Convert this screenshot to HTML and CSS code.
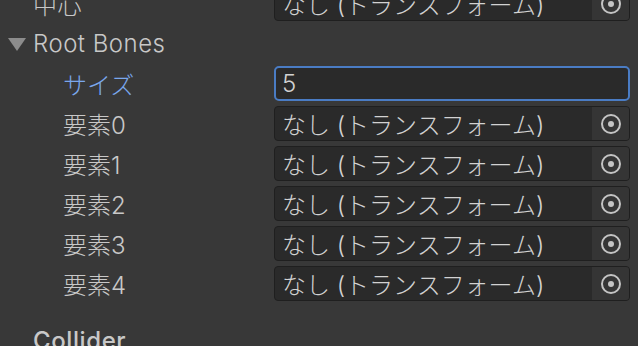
FILE: index.html
```html
<!DOCTYPE html>
<html lang="ja">
<head>
<meta charset="utf-8">
<link rel="stylesheet" href="styles.css">
</head>
<body>
<div class="inspector">
  <div class="row">
    <div class="label">中心</div>
    <div class="field object">
      <span class="value">なし (トランスフォーム)</span>
      <span class="picker"><svg viewBox="0 0 22 22" width="22" height="22"><circle cx="11" cy="11" r="9" fill="none" stroke="#c4c4c4" stroke-width="2"/><circle cx="11" cy="11" r="3" fill="#c4c4c4"/></svg></span>
    </div>
  </div>
  <div class="row">
    <div class="label foldout"><span class="tri"></span>Root Bones</div>
  </div>
  <div class="row">
    <div class="label nested active">サイズ</div>
    <div class="field input"><span class="value">5</span></div>
  </div>
  <div class="row">
    <div class="label nested">要素0</div>
    <div class="field object">
      <span class="value">なし (トランスフォーム)</span>
      <span class="picker"><svg viewBox="0 0 22 22" width="22" height="22"><circle cx="11" cy="11" r="9" fill="none" stroke="#c4c4c4" stroke-width="2"/><circle cx="11" cy="11" r="3" fill="#c4c4c4"/></svg></span>
    </div>
  </div>
  <div class="row">
    <div class="label nested">要素1</div>
    <div class="field object">
      <span class="value">なし (トランスフォーム)</span>
      <span class="picker"><svg viewBox="0 0 22 22" width="22" height="22"><circle cx="11" cy="11" r="9" fill="none" stroke="#c4c4c4" stroke-width="2"/><circle cx="11" cy="11" r="3" fill="#c4c4c4"/></svg></span>
    </div>
  </div>
  <div class="row">
    <div class="label nested">要素2</div>
    <div class="field object">
      <span class="value">なし (トランスフォーム)</span>
      <span class="picker"><svg viewBox="0 0 22 22" width="22" height="22"><circle cx="11" cy="11" r="9" fill="none" stroke="#c4c4c4" stroke-width="2"/><circle cx="11" cy="11" r="3" fill="#c4c4c4"/></svg></span>
    </div>
  </div>
  <div class="row">
    <div class="label nested">要素3</div>
    <div class="field object">
      <span class="value">なし (トランスフォーム)</span>
      <span class="picker"><svg viewBox="0 0 22 22" width="22" height="22"><circle cx="11" cy="11" r="9" fill="none" stroke="#c4c4c4" stroke-width="2"/><circle cx="11" cy="11" r="3" fill="#c4c4c4"/></svg></span>
    </div>
  </div>
  <div class="row">
    <div class="label nested">要素4</div>
    <div class="field object">
      <span class="value">なし (トランスフォーム)</span>
      <span class="picker"><svg viewBox="0 0 22 22" width="22" height="22"><circle cx="11" cy="11" r="9" fill="none" stroke="#c4c4c4" stroke-width="2"/><circle cx="11" cy="11" r="3" fill="#c4c4c4"/></svg></span>
    </div>
  </div>
  <div class="section">Collider</div>
</div>
</body>
</html>
```
FILE: styles.css
```css
html, body {
  margin: 0;
  padding: 0;
  background: #383838;
  overflow: hidden;
}
body {
  width: 638px;
  height: 346px;
  font-family: "Inter", "Noto Sans CJK JP", sans-serif;
  font-size: 24px;
  font-weight: 300;
  color: #c8c8c8;
}
.inspector {
  display: flex;
  flex-direction: column;
  gap: 5px;
  margin-top: -14px;
  padding-right: 8px;
}
.row {
  display: flex;
  align-items: center;
  height: 35px;
}
.label {
  width: 241px;
  padding-left: 33px;
  white-space: nowrap;
  flex-shrink: 0;
  letter-spacing: 0.5px;
}
.label.nested {
  padding-left: 63px;
  width: 211px;
  letter-spacing: 0;
}
.label.active {
  color: #7aa7ec;
}
.label.foldout {
  position: relative;
}
.tri {
  position: absolute;
  left: 8px;
  top: 50%;
  margin-top: -6px;
  width: 0;
  height: 0;
  border-left: 9px solid transparent;
  border-right: 9px solid transparent;
  border-top: 13px solid #8c8c8c;
}
.field {
  flex: 1;
  height: 35px;
  box-sizing: border-box;
  display: flex;
  align-items: center;
  background: #2a2a2a;
  border: 1px solid #1f1f1f;
  border-radius: 4px;
  color: #d2d2d2;
  overflow: hidden;
}
.field .value {
  flex: 1;
  padding-left: 7px;
  white-space: nowrap;
}
.field.input {
  border: 2px solid #4a7cc4;
  border-radius: 5px;
}
.field.input .value {
  padding-left: 6px;
}
.picker {
  width: 37px;
  align-self: stretch;
  display: flex;
  align-items: center;
  justify-content: center;
  background: #353535;
}
.section {
  margin-top: 17px;
  padding-left: 33px;
  font-weight: 500;
  letter-spacing: 0.6px;
  color: #c8c8c8;
  height: 35px;
  line-height: 35px;
}
```
